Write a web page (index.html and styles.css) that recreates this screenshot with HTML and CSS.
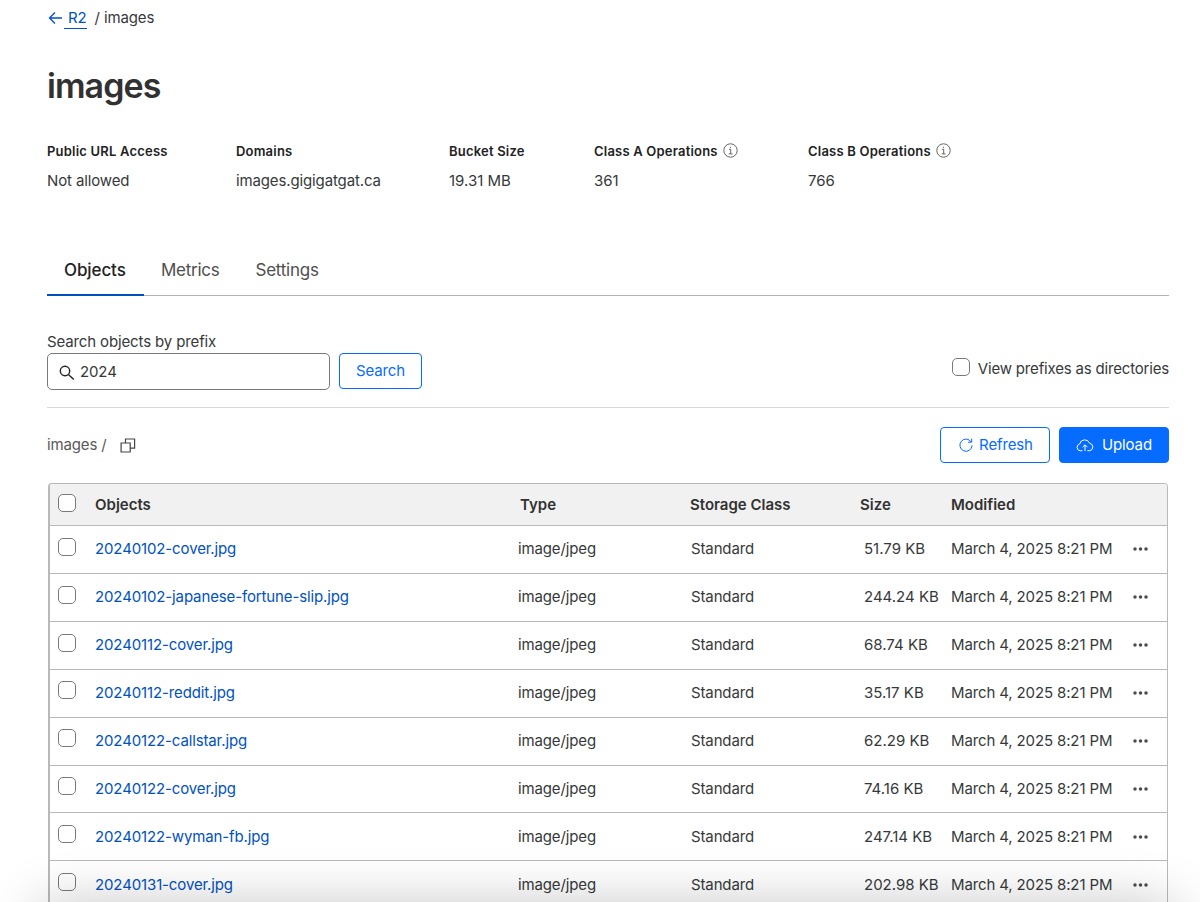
FILE: index.html
```html
<!DOCTYPE html>
<html lang="en">
<head>
    <meta charset="UTF-8">
    <meta name="viewport" content="width=device-width, initial-scale=1.0">
    <title>images | R2</title>
    <link rel="stylesheet" href="styles.css">
</head>
<body>
    <main class="page">
        <nav class="breadcrumb">
            <svg class="back-icon" width="15" height="14" viewBox="0 0 15 14"><path d="M14 7H1.5M7 1.5L1.5 7L7 12.5"/></svg>
            <a href="#">R2</a>
            <span>/ images</span>
        </nav>

        <h1>images</h1>

        <div class="stats">
            <div class="stat">
                <div class="stat-label">Public URL Access</div>
                <div class="stat-value">Not allowed</div>
            </div>
            <div class="stat">
                <div class="stat-label">Domains</div>
                <div class="stat-value">images.gigigatgat.ca</div>
            </div>
            <div class="stat">
                <div class="stat-label">Bucket Size</div>
                <div class="stat-value number">19.31 MB</div>
            </div>
            <div class="stat">
                <div class="stat-label">Class A Operations
                    <svg class="info-icon" width="15" height="15" viewBox="0 0 15 15"><circle cx="7.5" cy="7.5" r="6.7"/><path d="M6 6.3H7.7V10.8M5.7 10.9H9.5M7.4 3.7V4.9"/></svg>
                </div>
                <div class="stat-value number">361</div>
            </div>
            <div class="stat">
                <div class="stat-label">Class B Operations
                    <svg class="info-icon" width="15" height="15" viewBox="0 0 15 15"><circle cx="7.5" cy="7.5" r="6.7"/><path d="M6 6.3H7.7V10.8M5.7 10.9H9.5M7.4 3.7V4.9"/></svg>
                </div>
                <div class="stat-value number">766</div>
            </div>
        </div>

        <div class="tabs">
            <a class="tab active" href="#">Objects</a>
            <a class="tab" href="#">Metrics</a>
            <a class="tab" href="#">Settings</a>
        </div>

        <div class="search">
            <div class="search-form">
                <label for="prefix">Search objects by prefix</label>
                <div class="search-row">
                    <div class="search-input">
                        <svg width="16" height="16" viewBox="0 0 16 16"><circle cx="6" cy="6" r="4.7"/><path d="M9.4 9.4L14.8 14.6"/></svg>
                        <input type="text" id="prefix" value="2024">
                    </div>
                    <button class="btn btn-search">Search</button>
                </div>
            </div>
            <label class="directories"><input type="checkbox">View prefixes as directories</label>
        </div>

        <div class="toolbar">
            <div class="path">images /
                <svg width="16" height="15" viewBox="0 0 16 15"><path d="M5.5 4.5V1H14.6V10.2H10.3M1.1 5H10.2V14H1.1Z"/></svg>
            </div>
            <div class="actions">
                <button class="btn btn-refresh">
                    <svg width="14" height="14" viewBox="0 0 14 14"><path d="M12.2 4A6.1 6.1 0 1 0 13.1 7.3M12.7 .6V4.2H9"/></svg>
                    Refresh
                </button>
                <button class="btn btn-primary">
                    <svg width="18" height="13" viewBox="0 0 18 13"><path d="M6.5 11.7H4.2A3.4 3.4 0 0 1 3.7 5A5.1 5.1 0 0 1 13.5 4.2A3.8 3.8 0 0 1 13.7 11.7H11.4M9 12V6M6.6 8.2L9 5.8L11.4 8.2"/></svg>
                    Upload
                </button>
            </div>
        </div>

        <div class="table">
            <div class="row head">
                <input type="checkbox">
                <span>Objects</span>
                <span>Type</span>
                <span>Storage Class</span>
                <span>Size</span>
                <span>Modified</span>
            </div>
            <div class="row">
                <input type="checkbox">
                <a href="#">20240102-cover.jpg</a>
                <span>image/jpeg</span>
                <span>Standard</span>
                <span class="number">51.79 KB</span>
                <span>March 4, 2025 8:21 PM</span>
                <svg class="more" width="15" height="4" viewBox="0 0 15 4"><circle cx="2" cy="2" r="1.75"/><circle cx="7.5" cy="2" r="1.75"/><circle cx="13" cy="2" r="1.75"/></svg>
            </div>
            <div class="row">
                <input type="checkbox">
                <a href="#">20240102-japanese-fortune-slip.jpg</a>
                <span>image/jpeg</span>
                <span>Standard</span>
                <span class="number">244.24 KB</span>
                <span>March 4, 2025 8:21 PM</span>
                <svg class="more" width="15" height="4" viewBox="0 0 15 4"><circle cx="2" cy="2" r="1.75"/><circle cx="7.5" cy="2" r="1.75"/><circle cx="13" cy="2" r="1.75"/></svg>
            </div>
            <div class="row">
                <input type="checkbox">
                <a href="#">20240112-cover.jpg</a>
                <span>image/jpeg</span>
                <span>Standard</span>
                <span class="number">68.74 KB</span>
                <span>March 4, 2025 8:21 PM</span>
                <svg class="more" width="15" height="4" viewBox="0 0 15 4"><circle cx="2" cy="2" r="1.75"/><circle cx="7.5" cy="2" r="1.75"/><circle cx="13" cy="2" r="1.75"/></svg>
            </div>
            <div class="row">
                <input type="checkbox">
                <a href="#">20240112-reddit.jpg</a>
                <span>image/jpeg</span>
                <span>Standard</span>
                <span class="number">35.17 KB</span>
                <span>March 4, 2025 8:21 PM</span>
                <svg class="more" width="15" height="4" viewBox="0 0 15 4"><circle cx="2" cy="2" r="1.75"/><circle cx="7.5" cy="2" r="1.75"/><circle cx="13" cy="2" r="1.75"/></svg>
            </div>
            <div class="row">
                <input type="checkbox">
                <a href="#">20240122-callstar.jpg</a>
                <span>image/jpeg</span>
                <span>Standard</span>
                <span class="number">62.29 KB</span>
                <span>March 4, 2025 8:21 PM</span>
                <svg class="more" width="15" height="4" viewBox="0 0 15 4"><circle cx="2" cy="2" r="1.75"/><circle cx="7.5" cy="2" r="1.75"/><circle cx="13" cy="2" r="1.75"/></svg>
            </div>
            <div class="row">
                <input type="checkbox">
                <a href="#">20240122-cover.jpg</a>
                <span>image/jpeg</span>
                <span>Standard</span>
                <span class="number">74.16 KB</span>
                <span>March 4, 2025 8:21 PM</span>
                <svg class="more" width="15" height="4" viewBox="0 0 15 4"><circle cx="2" cy="2" r="1.75"/><circle cx="7.5" cy="2" r="1.75"/><circle cx="13" cy="2" r="1.75"/></svg>
            </div>
            <div class="row">
                <input type="checkbox">
                <a href="#">20240122-wyman-fb.jpg</a>
                <span>image/jpeg</span>
                <span>Standard</span>
                <span class="number">247.14 KB</span>
                <span>March 4, 2025 8:21 PM</span>
                <svg class="more" width="15" height="4" viewBox="0 0 15 4"><circle cx="2" cy="2" r="1.75"/><circle cx="7.5" cy="2" r="1.75"/><circle cx="13" cy="2" r="1.75"/></svg>
            </div>
            <div class="row">
                <input type="checkbox">
                <a href="#">20240131-cover.jpg</a>
                <span>image/jpeg</span>
                <span>Standard</span>
                <span class="number">202.98 KB</span>
                <span>March 4, 2025 8:21 PM</span>
                <svg class="more" width="15" height="4" viewBox="0 0 15 4"><circle cx="2" cy="2" r="1.75"/><circle cx="7.5" cy="2" r="1.75"/><circle cx="13" cy="2" r="1.75"/></svg>
            </div>
        </div>
        <div class="bottom-shadow"></div>
    </main>
</body>
</html>
```
FILE: styles.css
```css
* {
    box-sizing: border-box;
}
body {
    margin: 0;
    background-color: white;
    font-family: Inter, sans-serif;
    font-size: 15px;
    line-height: 20px;
    letter-spacing: -0.13px;
    color: #36393a;
}
a {
    color: #0051c3;
    text-decoration: none;
}
svg {
    fill: none;
    stroke: currentColor;
    flex-shrink: 0;
}
input, button {
    font: inherit;
    letter-spacing: inherit;
    color: inherit;
    margin: 0;
}
.page {
    position: relative;
    height: 902px;
    padding: 8px 31px 0 47px;
    overflow: hidden;
}
.breadcrumb {
    display: flex;
    height: 21px;
}
.breadcrumb a {
    padding: 0 0 0 4px;
    margin-right: 8px;
    border-bottom: 1.5px solid #0051c3;
}
.back-icon {
    color: #0051c3;
    margin: 3px 1px 0 1px;
    stroke-width: 1.3;
}
h1 {
    margin: 36px 0 0;
    font-size: 34px;
    line-height: 42px;
    font-weight: 600;
    letter-spacing: -0.95px;
    color: #313131;
}
.stats {
    display: grid;
    grid-template-columns: 189px 213px 145px 214px 1fr;
    margin-top: 34px;
}
.stat-label {
    display: flex;
    align-items: center;
    gap: 5px;
    font-size: 13px;
    font-weight: 600;
    letter-spacing: 0.2px;
    color: #222;
}
.stat-value {
    margin-top: 10px;
}
.number {
    letter-spacing: 0;
}
.info-icon {
    margin-top: -1px;
    color: #555;
    stroke-width: 0.9;
}
.tabs {
    display: flex;
    margin-top: 54px;
    height: 51px;
    border-bottom: 1px solid #b3b3b3;
}
.tab {
    padding: 15px 18px 0 17px;
    font-size: 17px;
    letter-spacing: -0.25px;
    color: #4e4e4e;
}
.tab:nth-child(3) {
    padding-left: 18px;
}
.tab.active {
    width: 97px;
    height: 51px;
    color: #222;
    font-weight: 500;
    letter-spacing: -0.1px;
    border-bottom: 2px solid #0051c3;
}
.search {
    display: flex;
    justify-content: space-between;
    height: 112px;
    padding-top: 36px;
    border-bottom: 1px solid #d9d9d9;
}
.search-form label {
    display: block;
    height: 21px;
}
.search-row {
    display: flex;
    gap: 9px;
}
.search-input {
    display: flex;
    align-items: center;
    width: 283px;
    height: 37px;
    padding-left: 11px;
    border: 1px solid #797979;
    border-radius: 5px;
}
.search-input svg {
    margin-top: 3px;
    color: #222;
    stroke-width: 1.4;
}
.search-input input {
    width: 220px;
    padding: 0 0 0 5px;
    border: none;
    outline: none;
    background: none;
}
.btn {
    display: flex;
    align-items: center;
    justify-content: center;
    height: 36px;
    padding: 0;
    border: 1px solid #056cff;
    border-radius: 4px;
    background-color: white;
    color: #056cff;
    cursor: pointer;
}
.btn-search {
    width: 83px;
}
.btn-refresh {
    width: 110px;
    padding-left: 2px;
    gap: 6px;
}
.btn-primary {
    width: 110px;
    gap: 8px;
    background-color: #056cff;
    color: white;
}
input[type="checkbox"] {
    appearance: none;
    width: 18px;
    height: 18px;
    border: 1px solid #797979;
    border-radius: 5px;
    background-color: white;
}
.directories {
    display: flex;
    align-items: flex-start;
    gap: 8px;
    padding-top: 27px;
    letter-spacing: -0.18px;
}
.directories input {
    margin-top: -1px;
}
.toolbar {
    display: flex;
    justify-content: space-between;
    align-items: center;
    height: 75px;
    padding-bottom: 1px;
}
.path {
    display: flex;
    align-items: center;
    gap: 13px;
    color: #595959;
}
.path svg {
    color: #444;
    stroke-width: 1.2;
}
.actions {
    display: flex;
    gap: 9px;
}
.table {
    margin: 0 1px;
    border: 1px solid #b9b9b9;
    border-left-width: 2px;
    border-radius: 4px;
    overflow: hidden;
}
.row {
    display: grid;
    grid-template-columns: 37px 423px 173px 173px 87px 182px 1fr;
    align-items: center;
    height: 47.92px;
    padding: 0 0 0.4px 8px;
    border-bottom: 1px solid #b9b9b9;
}
.row > input {
    margin-top: -5px;
}
.head {
    height: 42px;
    padding-bottom: 0;
    background-color: #f1f1f1;
    font-weight: 600;
    letter-spacing: 0;
    color: #313131;
}
.head > input {
    margin-top: -4px;
}
.head > span:nth-child(3) {
    padding-left: 2px;
}
.head > span:nth-child(4) {
    margin-left: -1px;
}
.head > span:nth-child(5) {
    margin-left: -4px;
}
.more {
    fill: #4a4a4a;
    stroke: none;
}
/* soft shade along the bottom edge */
.bottom-shadow {
    position: absolute;
    left: 40px;
    right: 25px;
    top: 905px;
    height: 60px;
    box-shadow: 0 0 55px rgba(0, 0, 0, 0.24);
    pointer-events: none;
}
```
